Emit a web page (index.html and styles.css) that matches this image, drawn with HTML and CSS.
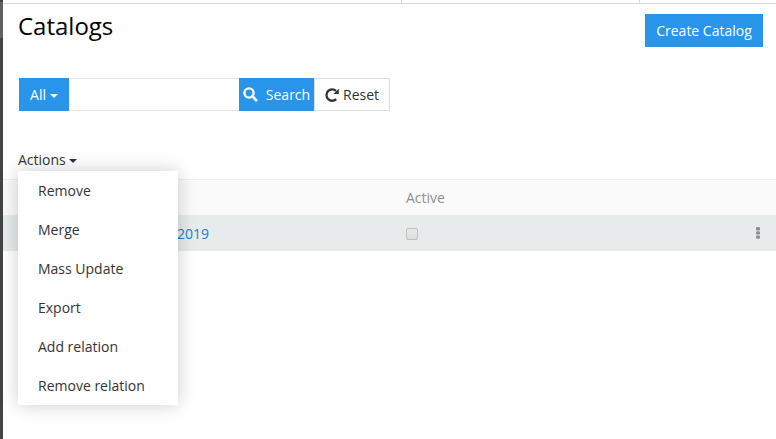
FILE: index.html
```html
<!DOCTYPE html>
<html lang="en">
<head>
<meta charset="utf-8">
<title>Catalogs</title>
<link rel="stylesheet" href="styles.css">
</head>
<body>
<div class="app">
  <aside class="sidebar"><div class="sidebar-item"></div></aside>
  <main class="main">
    <div class="topbar"><span class="tab tab-search"></span><span class="tab tab-links"></span></div>
    <header class="page-header">
      <h1>Catalogs</h1>
      <button class="btn primary create">Create Catalog</button>
    </header>
    <div class="search-row">
      <button class="btn primary filter">All<span class="caret"></span></button>
      <input class="search-input" type="text" aria-label="Search">
      <button class="btn primary search"><svg width="15" height="15" viewBox="0 0 15 15"><circle cx="6" cy="6" r="4.6" fill="none" stroke="currentColor" stroke-width="2.4"/><path d="M9.4 9.4L13.2 13.2" stroke="currentColor" stroke-width="2.7" stroke-linecap="round"/></svg><span>Search</span></button>
      <button class="btn reset"><svg width="14" height="14" viewBox="0 0 14 14"><path d="M11.2 11.1A5.7 5.7 0 1 1 11 2.8" fill="none" stroke="currentColor" stroke-width="2.3"/><path d="M13.8 .7V6H8.3Z" fill="currentColor"/></svg><span>Reset</span></button>
    </div>
    <div class="actions">
      <span class="actions-toggle">Actions<span class="caret"></span></span>
      <ul class="menu">
        <li>Remove</li>
        <li>Merge</li>
        <li>Mass Update</li>
        <li>Export</li>
        <li>Add relation</li>
        <li>Remove relation</li>
      </ul>
    </div>
    <div class="table">
      <div class="row head"><span class="name"></span><span class="active">Active</span></div>
      <div class="row item">
        <span class="name"><a>2019</a></span>
        <span class="active"><span class="checkbox"></span></span>
        <svg class="dots" width="4" height="12" viewBox="0 0 4 12" fill="currentColor"><rect width="4" height="3.4" rx="1.2"/><rect y="4.2" width="4" height="3.4" rx="1.2"/><rect y="8.4" width="4" height="3.4" rx="1.2"/></svg>
      </div>
    </div>
  </main>
</div>
</body>
</html>
```

FILE: styles.css
```css
* { box-sizing: border-box; }
body {
  margin: 0;
  background: #fff;
  color: #333;
  font: 14px/20px "Open Sans", sans-serif;
  overflow: hidden;
}
.app { display: flex; height: 439px; }
.sidebar { width: 3px; padding-top: 2px; background: #434343; }
.sidebar-item { height: 36px; background: #606060; }
.main { flex: 1; min-width: 0; }
.topbar { display: flex; height: 4px; border-bottom: 1px solid #d9d9d9; }
.tab { border-right: 1px solid #d9d9d9; }
.tab-search { width: 399px; }
.tab-links { width: 238px; }
.page-header {
  display: flex;
  justify-content: space-between;
  align-items: flex-start;
  height: 74px;
  padding: 10px 13px 0 15px;
}
h1 { margin: -2px 0 0; color: #000; font-size: 24px; line-height: 27px; font-weight: 400; }
.btn {
  display: flex;
  align-items: center;
  justify-content: center;
  height: 33px;
  padding: 0;
  border: 0;
  color: #333;
  background: #fff;
  font: inherit;
}
.primary { color: #fff; background: #2895ea; }
.create { width: 118px; }
.search-row { display: flex; height: 33px; margin-left: 16px; }
.filter { width: 50px; }
.caret {
  display: inline-block;
  margin-left: 4px;
  border: 4px solid transparent;
  border-top-color: currentColor;
  border-bottom: 0;
  vertical-align: middle;
}
.filter .caret { margin-top: 2px; }
.actions-toggle .caret { margin-left: 3px; }
.search-input { width: 170px; border: solid #e8e8e8; border-width: 1px 0; padding: 0 8px; outline: 0; }
.search { width: 75px; gap: 8px; }
.reset { width: 76px; gap: 4px; border: 1px solid #ddd; }
.actions { position: relative; height: 68px; padding: 39px 0 0 15px; }
.menu {
  position: absolute;
  z-index: 1;
  top: 60px;
  left: 15px;
  width: 160px;
  margin: 0;
  padding: 0;
  list-style: none;
  background: #fff;
  box-shadow: 0 0 18px rgba(0, 0, 0, .2);
}
.menu li { height: 39px; padding: 10px 20px 9px; }
.row { display: flex; align-items: center; height: 36px; }
.head { color: #909090; background: #fafafa; border-top: 1px solid #f0f0f0; }
.item { background: #e8ebeb; }
.name { width: 403px; padding: 2px 0 0 174px; }
.name a { color: #1c7cd0; }
.active { flex: 1; }
.checkbox {
  display: block;
  width: 12px;
  height: 12px;
  margin-top: 2px;
  border: 1px solid #bfc1c1;
  border-radius: 2px;
  background: linear-gradient(#e9e9e9, #dedede);
}
.dots { margin: -1px 16px 0 0; color: #8c8f90; }
```
